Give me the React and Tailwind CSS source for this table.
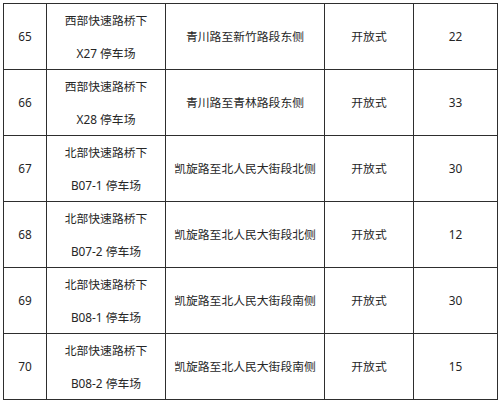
export default function App() {
  const rows = [
    ["65", "西部快速路桥下", "X27 停车场", "青川路至新竹路段东侧", "开放式", "22"],
    ["66", "西部快速路桥下", "X28 停车场", "青川路至青林路段东侧", "开放式", "33"],
    ["67", "北部快速路桥下", "B07-1 停车场", "凯旋路至北人民大街段北侧", "开放式", "30"],
    ["68", "北部快速路桥下", "B07-2 停车场", "凯旋路至北人民大街段北侧", "开放式", "12"],
    ["69", "北部快速路桥下", "B08-1 停车场", "凯旋路至北人民大街段南侧", "开放式", "30"],
    ["70", "北部快速路桥下", "B08-2 停车场", "凯旋路至北人民大街段南侧", "开放式", "15"],
  ];
  const cell = "border-[1.5px] border-[#2e2e2e] text-center align-middle p-0";
  return (
    <div
      className="w-[500px] h-[406px] bg-white pt-[3px] pl-[3px] text-[#262626] text-[11.8px]"
      style={{ fontFamily: '"Noto Sans", "Noto Sans CJK SC", sans-serif' }}
    >
      <table className="table-fixed border-collapse w-[494px]">
        <colgroup>
          <col className="w-[43px]" />
          <col className="w-[119px]" />
          <col className="w-[159px]" />
          <col className="w-[89px]" />
          <col className="w-[84px]" />
        </colgroup>
        <tbody>
          {rows.map((r) => (
            <tr key={r[0]} className="h-[65px]">
              <td className={cell}>{r[0]}</td>
              <td className={cell}>
                <div className="leading-[32.5px]">{r[1]}</div>
                <div className="leading-[32.5px]">{r[2]}</div>
              </td>
              <td className={cell}>{r[3]}</td>
              <td className={cell}>{r[4]}</td>
              <td className={cell}>{r[5]}</td>
            </tr>
          ))}
        </tbody>
      </table>
    </div>
  );
}
